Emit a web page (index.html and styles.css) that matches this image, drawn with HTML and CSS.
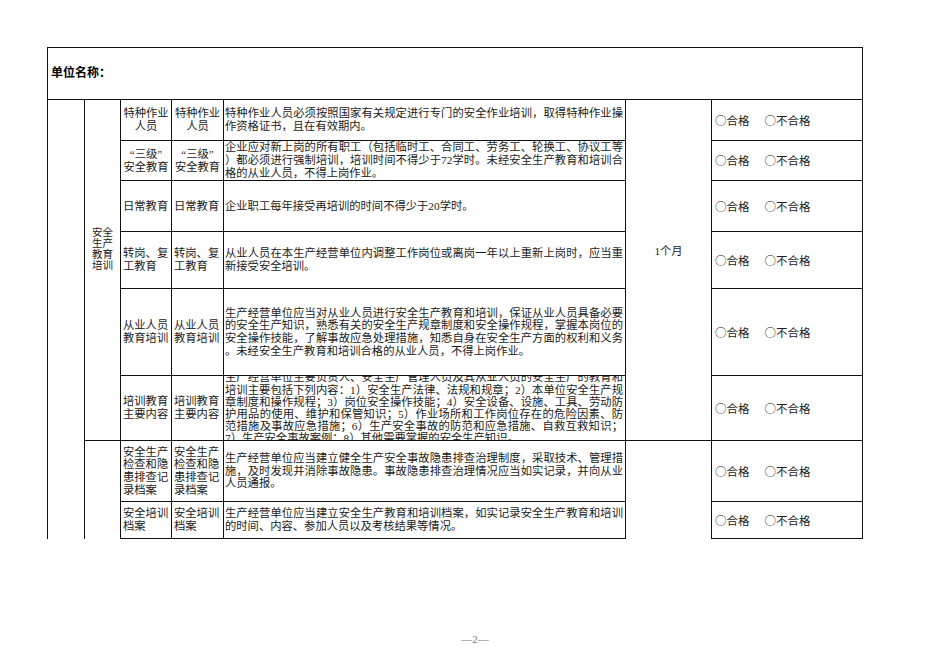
FILE: index.html
```html
<!DOCTYPE html>
<html lang="zh-CN">
<head>
<meta charset="utf-8">
<title>安全生产教育培训</title>
<link rel="stylesheet" href="styles.css">
</head>
<body>
<div class="wrap">
  <div class="sheet">
    <div class="c head">单位名称：</div>

    <div class="c colA"></div>
    <div class="c colB1"><div class="vt">安全<br>生产<br>教育<br>培训</div></div>
    <div class="c colB2 nob"></div>
    <div class="c colF1"><div class="period">1个月</div></div>
    <div class="c colF2 nob"></div>

    <!-- row 1 -->
    <div class="c r1 cc ctr"><div>特种作业<br>人员</div></div>
    <div class="c r1 cd ctr"><div>特种作业<br>人员</div></div>
    <div class="c r1 ce"><div class="txt">
      <span class="ln j">特种作业人员必须按照国家有关规定进行专门的安全作业培训，取得特种作业操</span>
      <span class="ln">作资格证书，且在有效期内。</span>
    </div></div>
    <div class="c r1 cg"><span>○合格</span><span>○不合格</span></div>

    <!-- row 2 -->
    <div class="c r2 cc ctr"><div>“三级”<br>安全教育</div></div>
    <div class="c r2 cd ctr"><div>“三级”<br>安全教育</div></div>
    <div class="c r2 ce"><div class="txt">
      <span class="ln j">企业应对新上岗的所有职工（包括临时工、合同工、劳务工、轮换工、协议工等</span>
      <span class="ln j">）都必须进行强制培训，培训时间不得少于72学时。未经安全生产教育和培训合</span>
      <span class="ln">格的从业人员，不得上岗作业。</span>
    </div></div>
    <div class="c r2 cg"><span>○合格</span><span>○不合格</span></div>

    <!-- row 3 -->
    <div class="c r3 cc"><div>日常教育</div></div>
    <div class="c r3 cd"><div>日常教育</div></div>
    <div class="c r3 ce"><div class="txt">
      <span class="ln">企业职工每年接受再培训的时间不得少于20学时。</span>
    </div></div>
    <div class="c r3 cg"><span>○合格</span><span>○不合格</span></div>

    <!-- row 4 -->
    <div class="c r4 cc"><div>转岗、复<br>工教育</div></div>
    <div class="c r4 cd"><div>转岗、复<br>工教育</div></div>
    <div class="c r4 ce"><div class="txt">
      <span class="ln j">从业人员在本生产经营单位内调整工作岗位或离岗一年以上重新上岗时，应当重</span>
      <span class="ln">新接受安全培训。</span>
    </div></div>
    <div class="c r4 cg"><span>○合格</span><span>○不合格</span></div>

    <!-- row 5 -->
    <div class="c r5 cc"><div>从业人员<br>教育培训</div></div>
    <div class="c r5 cd"><div>从业人员<br>教育培训</div></div>
    <div class="c r5 ce"><div class="txt">
      <span class="ln j">生产经营单位应当对从业人员进行安全生产教育和培训，保证从业人员具备必要</span>
      <span class="ln j">的安全生产知识，熟悉有关的安全生产规章制度和安全操作规程，掌握本岗位的</span>
      <span class="ln j">安全操作技能，了解事故应急处理措施，知悉自身在安全生产方面的权利和义务</span>
      <span class="ln">。未经安全生产教育和培训合格的从业人员，不得上岗作业。</span>
    </div></div>
    <div class="c r5 cg"><span>○合格</span><span>○不合格</span></div>

    <!-- row 6 -->
    <div class="c r6 cc"><div>培训教育<br>主要内容</div></div>
    <div class="c r6 cd"><div>培训教育<br>主要内容</div></div>
    <div class="c r6 ce"><div class="txt tight">
      <span class="ln j">生产经营单位主要负责人、安全生产管理人员及其从业人员的安全生产的教育和</span>
      <span class="ln j">培训主要包括下列内容：1）安全生产法律、法规和规章；2）本单位安全生产规</span>
      <span class="ln j">章制度和操作规程；3）岗位安全操作技能；4）安全设备、设施、工具、劳动防</span>
      <span class="ln j">护用品的使用、维护和保管知识；5）作业场所和工作岗位存在的危险因素、防</span>
      <span class="ln j">范措施及事故应急措施；6）生产安全事故的防范和应急措施、自救互救知识；</span>
      <span class="ln">7）生产安全事故案例；8）其他需要掌握的安全生产知识。</span>
    </div></div>
    <div class="c r6 cg"><span>○合格</span><span>○不合格</span></div>

    <!-- row 7 -->
    <div class="c r7 cc"><div>安全生产<br>检查和隐<br>患排查记<br>录档案</div></div>
    <div class="c r7 cd"><div>安全生产<br>检查和隐<br>患排查记<br>录档案</div></div>
    <div class="c r7 ce"><div class="txt">
      <span class="ln j">生产经营单位应当建立健全生产安全事故隐患排查治理制度，采取技术、管理措</span>
      <span class="ln j">施，及时发现并消除事故隐患。事故隐患排查治理情况应当如实记录，并向从业</span>
      <span class="ln">人员通报。</span>
    </div></div>
    <div class="c r7 cg"><span>○合格</span><span>○不合格</span></div>

    <!-- row 8 -->
    <div class="c r8 cc"><div>安全培训<br>档案</div></div>
    <div class="c r8 cd"><div>安全培训<br>档案</div></div>
    <div class="c r8 ce"><div class="txt">
      <span class="ln j">生产经营单位应当建立安全生产教育和培训档案，如实记录安全生产教育和培训</span>
      <span class="ln">的时间、内容、参加人员以及考核结果等情况。</span>
    </div></div>
    <div class="c r8 cg"><span>○合格</span><span>○不合格</span></div>
  </div>
</div>
<div class="footer">—2—</div>
</body>
</html>
```

FILE: styles.css
```css
html, body {
  margin: 0;
  padding: 0;
  background: #fff;
}

body {
  width: 950px;
  height: 672px;
  font-family: "Liberation Serif", "Noto Sans CJK SC", serif;
  color: #1a1a1a;
  font-size: 11.3px;
}

.wrap {
  padding: 47px 0 0 47px;
}

.sheet {
  display: grid;
  width: 816px;
  box-sizing: border-box;
  border-top: 1px solid #111;
  border-left: 1px solid #111;
  grid-template-columns: 37px 36px 51px 52px 402px 86px 151px;
  grid-template-rows: 52px 41px 40px 51px 57px 87px 65px 61px 37px;
}

.c {
  box-sizing: border-box;
  border-right: 1px solid #111;
  border-bottom: 1px solid #111;
  overflow: hidden;
  display: flex;
  align-items: center;
  line-height: 12.7px;
}

.nob {
  border-bottom: none;
}

.head {
  grid-column: 1 / -1;
  grid-row: 1;
  padding-left: 3px;
  font-weight: bold;
  font-size: 12px;
  color: #000;
}

.colA {
  grid-column: 1;
  grid-row: 2 / 10;
  border-bottom: none;
}

.colB1 {
  grid-column: 2;
  grid-row: 2 / 8;
  justify-content: center;
  padding-bottom: 42px;
}

.colB2 {
  grid-column: 2;
  grid-row: 8 / 10;
}

.colF1 {
  grid-column: 6;
  grid-row: 2 / 8;
  justify-content: center;
  padding-bottom: 38px;
}

.colF2 {
  grid-column: 6;
  grid-row: 8 / 10;
}

.vt {
  font-size: 10.5px;
  line-height: 11px;
  text-align: center;
}

.period {
  font-size: 11.3px;
}

.r1 { grid-row: 2; }
.r2 { grid-row: 3; }
.r3 { grid-row: 4; }
.r4 { grid-row: 5; }
.r5 { grid-row: 6; }
.r6 { grid-row: 7; }
.r7 { grid-row: 8; }
.r8 { grid-row: 9; }

.cc { grid-column: 3; padding-left: 2px; white-space: nowrap; }
.cd { grid-column: 4; padding-left: 2px; white-space: nowrap; }
.ce { grid-column: 5; padding-left: 1px; padding-right: 2px; }
.cg {
  grid-column: 7;
  padding-left: 3px;
  gap: 15px;
  font-family: "Noto Sans CJK SC", sans-serif;
  font-size: 11.5px;
  color: #222;
}

.ctr {
  justify-content: center;
  text-align: center;
  padding-left: 0;
}

.txt {
  width: 100%;
}

.tight {
  line-height: 12.2px;
}

.ln {
  display: block;
  white-space: nowrap;
}

.j {
  text-align: justify;
  text-align-last: justify;
}

.footer {
  margin-top: 94px;
  text-align: center;
  font-family: "Liberation Serif", serif;
  font-size: 11px;
  color: #777;
  line-height: 12px;
}
```
